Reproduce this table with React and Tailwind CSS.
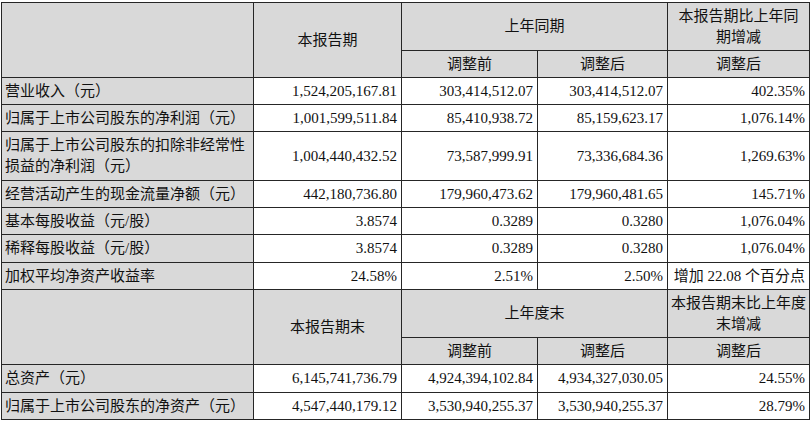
import React from "react";

const rows1 = [
  ["营业收入（元）", "1,524,205,167.81", "303,414,512.07", "303,414,512.07", "402.35%", 27],
  ["归属于上市公司股东的净利润（元）", "1,001,599,511.84", "85,410,938.72", "85,159,623.17", "1,076.14%", 27],
  ["归属于上市公司股东的扣除非经常性损益的净利润（元）", "1,004,440,432.52", "73,587,999.91", "73,336,684.36", "1,269.63%", 49],
  ["经营活动产生的现金流量净额（元）", "442,180,736.80", "179,960,473.62", "179,960,481.65", "145.71%", 27],
  ["基本每股收益（元/股）", "3.8574", "0.3289", "0.3280", "1,076.04%", 27],
  ["稀释每股收益（元/股）", "3.8574", "0.3289", "0.3280", "1,076.04%", 28],
  ["加权平均净资产收益率", "24.58%", "2.51%", "2.50%", "增加 22.08 个百分点", 27],
];

const rows2 = [
  ["总资产（元）", "6,145,741,736.79", "4,924,394,102.84", "4,934,327,030.05", "24.55%", 28],
  ["归属于上市公司股东的净资产（元）", "4,547,440,179.12", "3,530,940,255.37", "3,530,940,255.37", "28.79%", 27],
];

const cellB = "border border-[#262626]";
const hdr = `${cellB} bg-[#d9d9d9] text-center align-middle p-0`;
const lbl = `${cellB} bg-[#d9d9d9] text-left align-middle pl-[3px] pr-[2px] leading-[21px]`;
const num = `${cellB} bg-white text-right align-middle pr-[4px] pl-[2px] whitespace-nowrap`;

function Header({ a, b, c }) {
  return (
    <>
      <tr className="h-[48px]">
        <td rowSpan={2} className={hdr}></td>
        <td rowSpan={2} className={hdr}>{a}</td>
        <td colSpan={2} className={hdr}>{b}</td>
        <td className={`${hdr} leading-[21px]`}>{c}</td>
      </tr>
      <tr className="h-[27px]">
        <td className={hdr}>调整前</td>
        <td className={hdr}>调整后</td>
        <td className={hdr}>调整后</td>
      </tr>
    </>
  );
}

function Row({ r }) {
  const [label, v1, v2, v3, v4, h] = r;
  return (
    <tr style={{ height: h }}>
      <td className={lbl}>
        {label === "归属于上市公司股东的扣除非经常性损益的净利润（元）" ? (
          <>
            归属于上市公司股东的扣除非经常性
            <br />
            损益的净利润（元）
          </>
        ) : (
          label
        )}
      </td>
      <td className={num}>{v1}</td>
      <td className={num}>{v2}</td>
      <td className={num}>{v3}</td>
      <td className={num}>{v4}</td>
    </tr>
  );
}

export default function App() {
  return (
    <div
      className="w-[812px] h-[421px] bg-white pt-[2px] pl-[1px] text-[15px] text-[#111]"
      style={{ fontFamily: '"Liberation Serif", "Noto Sans CJK SC", serif' }}
    >
      <table className="table-fixed border-collapse w-[808px]">
        <colgroup>
          <col className="w-[252px]" />
          <col className="w-[148px]" />
          <col className="w-[136px]" />
          <col className="w-[130px]" />
          <col className="w-[142px]" />
        </colgroup>
        <tbody>
          <Header
            a="本报告期"
            b="上年同期"
            c={
              <>
                本报告期比上年同
                <br />
                期增减
              </>
            }
          />
          {rows1.map((r, i) => (
            <Row key={i} r={r} />
          ))}
          <Header
            a="本报告期末"
            b="上年度末"
            c={
              <>
                本报告期末比上年度
                <br />
                末增减
              </>
            }
          />
          {rows2.map((r, i) => (
            <Row key={i} r={r} />
          ))}
        </tbody>
      </table>
    </div>
  );
}
